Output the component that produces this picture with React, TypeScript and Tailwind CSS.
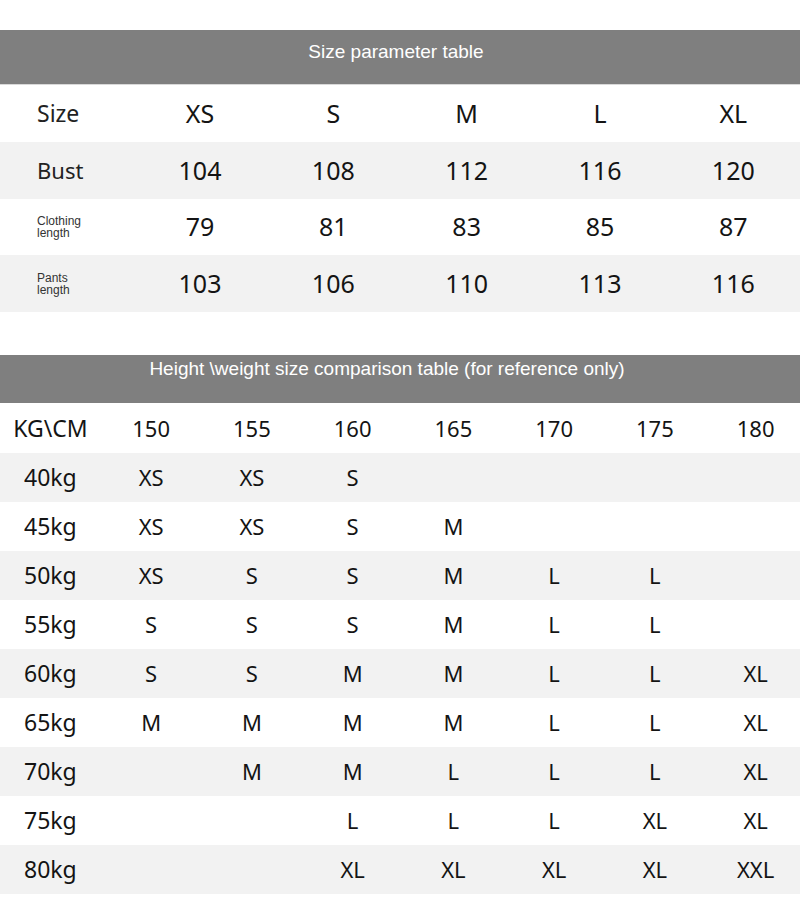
import React from "react";

const t1Heads = ["XS", "S", "M", "L", "XL"];
const t1Rows: { label: string; small?: boolean; bg: string; h: string; vals: string[] }[] = [
  { label: "Bust", bg: "bg-[#f2f2f2]", h: "h-[57px]", vals: ["104", "108", "112", "116", "120"] },
  { label: "Clothing|length", small: true, bg: "bg-white", h: "h-[56px]", vals: ["79", "81", "83", "85", "87"] },
  { label: "Pants|length", small: true, bg: "bg-[#f2f2f2]", h: "h-[57px]", vals: ["103", "106", "110", "113", "116"] },
];

const t2Heads = ["150", "155", "160", "165", "170", "175", "180"];
const t2Rows: [string, string[]][] = [
  ["40kg", ["XS", "XS", "S", "", "", "", ""]],
  ["45kg", ["XS", "XS", "S", "M", "", "", ""]],
  ["50kg", ["XS", "S", "S", "M", "L", "L", ""]],
  ["55kg", ["S", "S", "S", "M", "L", "L", ""]],
  ["60kg", ["S", "S", "M", "M", "L", "L", "XL"]],
  ["65kg", ["M", "M", "M", "M", "L", "L", "XL"]],
  ["70kg", ["", "M", "M", "L", "L", "L", "XL"]],
  ["75kg", ["", "", "L", "L", "L", "XL", "XL"]],
  ["80kg", ["", "", "XL", "XL", "XL", "XL", "XXL"]],
];

const body = { fontFamily: '"Noto Sans", "Open Sans", sans-serif' };
const arial = { fontFamily: '"Liberation Sans", Arial, sans-serif' };

export default function App() {
  return (
    <div className="w-[800px] h-[912px] bg-white text-[#141414] overflow-hidden" style={body}>
      <div className="h-[30px]" />
      <div className="h-[54px] bg-[#7f7f7f] flex justify-center pt-[11px] pr-[8px] text-white text-[19px] leading-[22px]" style={arial}>
        Size parameter table
      </div>
      <div className="h-[1px] bg-[#d9d9d9]" />
      <div className="grid grid-cols-6 h-[57px] items-center bg-white">
        <div className="pl-[37px] text-[23px] text-[#222]">Size</div>
        {t1Heads.map((h) => (
          <div key={h} className="text-center text-[25px]">{h}</div>
        ))}
      </div>
      {t1Rows.map((r) => (
        <div key={r.label} className={`grid grid-cols-6 ${r.h} items-center ${r.bg}`}>
          {r.small ? (
            <div className="pl-[37px] text-[12px] leading-[12px] text-[#333]" style={arial}>
              {r.label.split("|").map((p) => (
                <div key={p}>{p}</div>
              ))}
            </div>
          ) : (
            <div className="pl-[37px] text-[22px] text-[#222]">{r.label}</div>
          )}
          {r.vals.map((v, i) => (
            <div key={i} className="text-center text-[25px]">{v}</div>
          ))}
        </div>
      ))}
      <div className="h-[43px]" />
      <div className="h-[48px] bg-[#7f7f7f] flex justify-center pt-[3px] pr-[26px] text-white text-[19px] leading-[22px]" style={arial}>
        Height \weight size comparison table (for reference only)
      </div>
      <div className="grid grid-cols-8 w-[806px] h-[50px] items-center bg-white">
        <div className="text-center text-[23px]">KG\CM</div>
        {t2Heads.map((h) => (
          <div key={h} className="text-center text-[22px]">{h}</div>
        ))}
      </div>
      {t2Rows.map(([k, vals], ri) => (
        <div key={k} className={`grid grid-cols-8 w-[806px] h-[49px] items-center ${ri % 2 === 0 ? "bg-[#f2f2f2]" : "bg-white"}`}>
          <div className="text-center text-[23px]">{k}</div>
          {vals.map((v, i) => (
            <div key={i} className="text-center text-[22px]">{v}</div>
          ))}
        </div>
      ))}
    </div>
  );
}
